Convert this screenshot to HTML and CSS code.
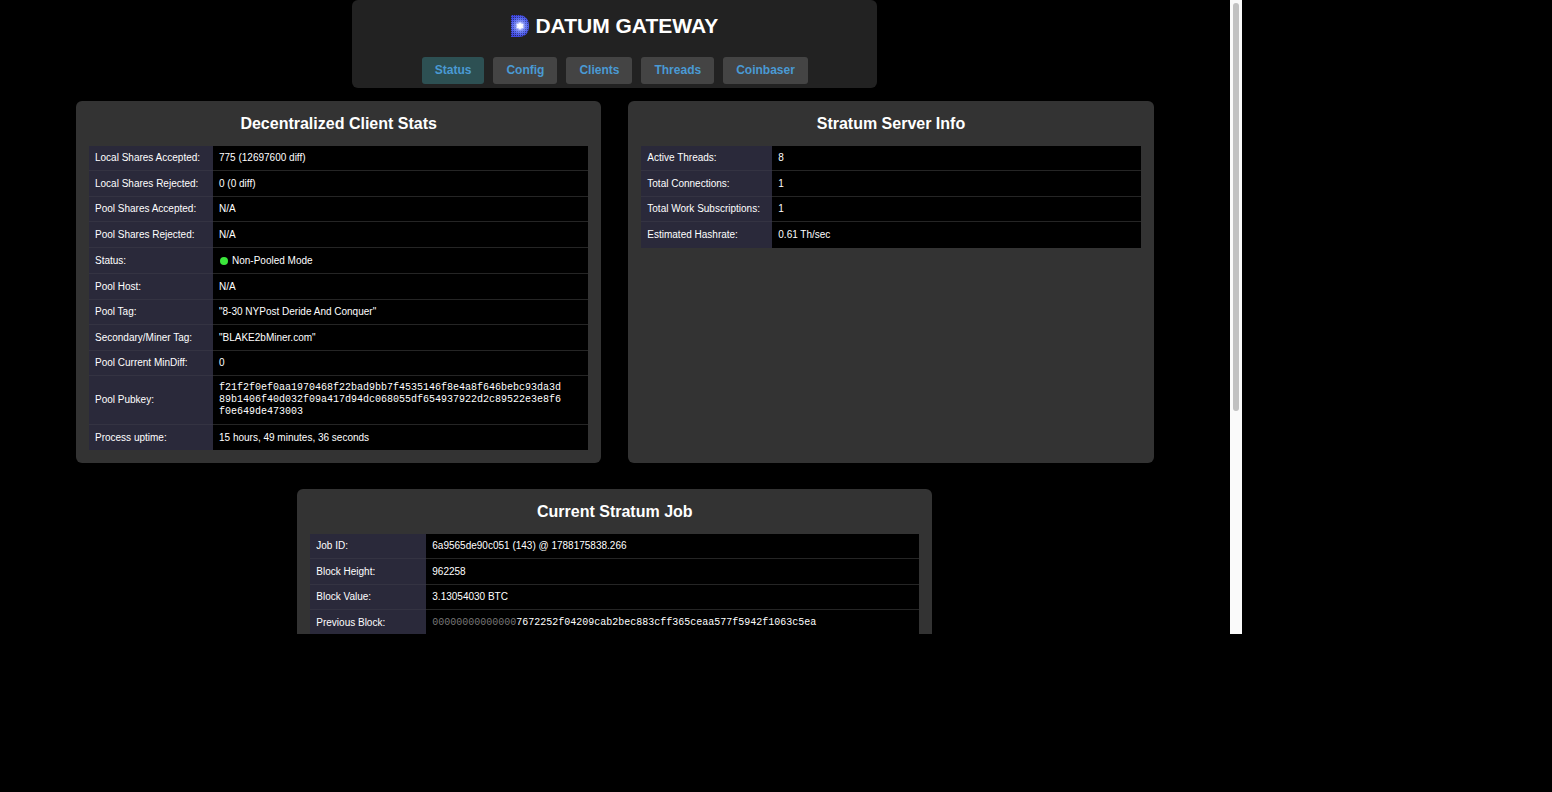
FILE: index.html
```html
<!DOCTYPE html>
<html lang="en">
<head>
<meta charset="utf-8">
<title>DATUM Gateway</title>
<link rel="stylesheet" href="styles.css">
</head>
<body>
<div class="frame">
  <div class="page">
    <header class="header">
      <h1 class="brand">
        <svg class="logo" viewBox="0 0 18 22" aria-hidden="true">
          <defs>
            <radialGradient id="glow" gradientUnits="userSpaceOnUse" cx="9" cy="11" r="11">
              <stop offset="0" stop-color="#ffffff"/>
              <stop offset="0.2" stop-color="#dfe5ff"/>
              <stop offset="0.42" stop-color="#8292f6"/>
              <stop offset="0.72" stop-color="#5566f0"/>
              <stop offset="1" stop-color="#4048e0"/>
            </radialGradient>
            <radialGradient id="fade" gradientUnits="userSpaceOnUse" cx="9" cy="11" r="11">
              <stop offset="0.3" stop-color="#000000"/>
              <stop offset="0.9" stop-color="#cccccc"/>
            </radialGradient>
            <pattern id="dots" width="2" height="2" patternUnits="userSpaceOnUse">
              <rect width="1" height="1" fill="#20204a"/>
            </pattern>
            <mask id="edge"><rect width="18" height="22" fill="url(#fade)"/></mask>
          </defs>
          <path d="M0 0H8C14 0 18 4 18 11S14 22 8 22H0Z" fill="url(#glow)"/>
          <path d="M0 0H8C14 0 18 4 18 11S14 22 8 22H0Z" fill="url(#dots)" mask="url(#edge)"/>
          <path d="M9 7l1 2.6 2.8-.8-1.5 2.2 1.5 2.2-2.8-.6L9 15l-1-2.4-2.8.6L6.700 11 5.200 8.800 8 9.600Z" fill="#fff"/>
        </svg>
        <span>DATUM GATEWAY</span>
      </h1>
      <nav class="nav">
        <a class="tab tab-active" href="#status" aria-current="page">Status</a>
        <a class="tab" href="#config">Config</a>
        <a class="tab" href="#clients">Clients</a>
        <a class="tab" href="#threads">Threads</a>
        <a class="tab" href="#coinbaser">Coinbaser</a>
      </nav>
    </header>
    <main class="main">
      <div class="cards">
        <section class="card">
          <h2 class="card-title">Decentralized Client Stats</h2>
          <table class="stats stats-client">
            <tr><th scope="row">Local Shares Accepted:</th><td>775 (12697600 diff)</td></tr>
            <tr><th scope="row">Local Shares Rejected:</th><td>0 (0 diff)</td></tr>
            <tr><th scope="row">Pool Shares Accepted:</th><td>N/A</td></tr>
            <tr><th scope="row">Pool Shares Rejected:</th><td>N/A</td></tr>
            <tr class="state"><th scope="row">Status:</th><td><span class="dot"></span>Non-Pooled Mode</td></tr>
            <tr><th scope="row">Pool Host:</th><td>N/A</td></tr>
            <tr><th scope="row">Pool Tag:</th><td>"8-30 NYPost Deride And Conquer"</td></tr>
            <tr><th scope="row">Secondary/Miner Tag:</th><td>"BLAKE2bMiner.com"</td></tr>
            <tr><th scope="row">Pool Current MinDiff:</th><td>0</td></tr>
            <tr class="tall"><th scope="row">Pool Pubkey:</th><td class="hash">f21f2f0ef0aa1970468f22bad9bb7f4535146f8e4a8f646bebc93da3d<br>89b1406f40d032f09a417d94dc068055df654937922d2c89522e3e8f6<br>f0e649de473003</td></tr>
            <tr><th scope="row">Process uptime:</th><td>15 hours, 49 minutes, 36 seconds</td></tr>
          </table>
        </section>
        <section class="card">
          <h2 class="card-title">Stratum Server Info</h2>
          <table class="stats stats-server">
            <tr><th scope="row">Active Threads:</th><td>8</td></tr>
            <tr><th scope="row">Total Connections:</th><td>1</td></tr>
            <tr><th scope="row">Total Work Subscriptions:</th><td>1</td></tr>
            <tr><th scope="row">Estimated Hashrate:</th><td>0.61 Th/sec</td></tr>
          </table>
        </section>
      </div>
      <section class="card card-job">
        <h2 class="card-title">Current Stratum Job</h2>
        <table class="stats stats-job">
          <tr><th scope="row">Job ID:</th><td>6a9565de90c051 (143) @ 1788175838.266</td></tr>
          <tr><th scope="row">Block Height:</th><td>962258</td></tr>
          <tr><th scope="row">Block Value:</th><td>3.13054030 BTC</td></tr>
          <tr><th scope="row">Previous Block:</th><td class="hash"><span class="zeros">00000000000000</span>7672252f04209cab2bec883cff365ceaa577f5942f1063c5ea</td></tr>
        </table>
      </section>
    </main>
  </div>
  <div class="scrollbar" aria-hidden="true"><div class="thumb"></div></div>
</div>
</body>
</html>
```

FILE: styles.css
```css
* {
  box-sizing: border-box;
}

body {
  margin: 0;
  background: #000;
  color: #fff;
  font-family: "Liberation Sans", Arial, sans-serif;
  font-size: 10px;
}

.frame {
  display: flex;
  width: 80vw;
  height: 80vh;
  overflow: hidden;
}

.page {
  flex: 1;
  min-width: 0;
  overflow: hidden;
}

.header {
  max-width: 525px;
  margin: 0 auto;
  padding: 14px 13px 4px;
  border-radius: 6px;
  background: #222;
}

.brand {
  display: flex;
  align-items: center;
  justify-content: center;
  gap: 6px;
  margin: 0 0 19px;
  font-size: 21px;
  line-height: 24px;
}

.logo {
  width: 18px;
  height: 22px;
}

.nav {
  display: flex;
  justify-content: center;
  gap: 9px;
}

.tab {
  padding: 0 13px;
  border-radius: 3px;
  background: #444;
  color: #4a9ad4;
  font-size: 12px;
  font-weight: bold;
  line-height: 27px;
  text-decoration: none;
}

.tab-active {
  background: #2d5053;
}

.main {
  padding: 13px 76px 0;
}

.cards {
  display: grid;
  grid-template-columns: 1fr 1fr;
  gap: 27px;
}

.card {
  padding: 13px;
  border-radius: 6px;
  background: #333;
}

.card-job {
  max-width: 635px;
  margin: 26px auto 0;
}

.card-title {
  margin: 0 0 12px;
  font-size: 16px;
  line-height: 20px;
  text-align: center;
}

.stats {
  width: 100%;
  border-collapse: separate;
  border-spacing: 0;
  table-layout: fixed;
}

.stats tr {
  height: 25px;
}

.stats .state,
.stats tr:nth-child(even) {
  height: 26px;
}

.stats .tall:nth-child(even) {
  height: 49px;
}

.stats th,
.stats td {
  padding: 0 6px;
  border-bottom: 1px solid #252525;
  line-height: 12px;
  text-align: left;
  vertical-align: middle;
}

.stats th {
  background: #2a293a;
  border-bottom-color: #343342;
  font-weight: normal;
  white-space: nowrap;
}

.stats td {
  background: #000;
}

.stats tr:last-child th,
.stats tr:last-child td {
  border-bottom: 0;
}

.stats-client th {
  width: 124px;
}

.stats-server th {
  width: 131px;
}

.stats-job th {
  width: 116px;
}

.stats .hash {
  font-family: "Liberation Mono", "Courier New", monospace;
}

.zeros {
  color: #777;
}

.dot {
  display: inline-block;
  width: 8px;
  height: 8px;
  margin: 0 4px 0 1px;
  border-radius: 50%;
  background: #3be63b;
  vertical-align: -1px;
}

.scrollbar {
  width: 12px;
  padding: 3px;
  background: #fafafa;
}

.thumb {
  height: 65%;
  border-radius: 3px;
  background: #c1c1c1;
}
```
